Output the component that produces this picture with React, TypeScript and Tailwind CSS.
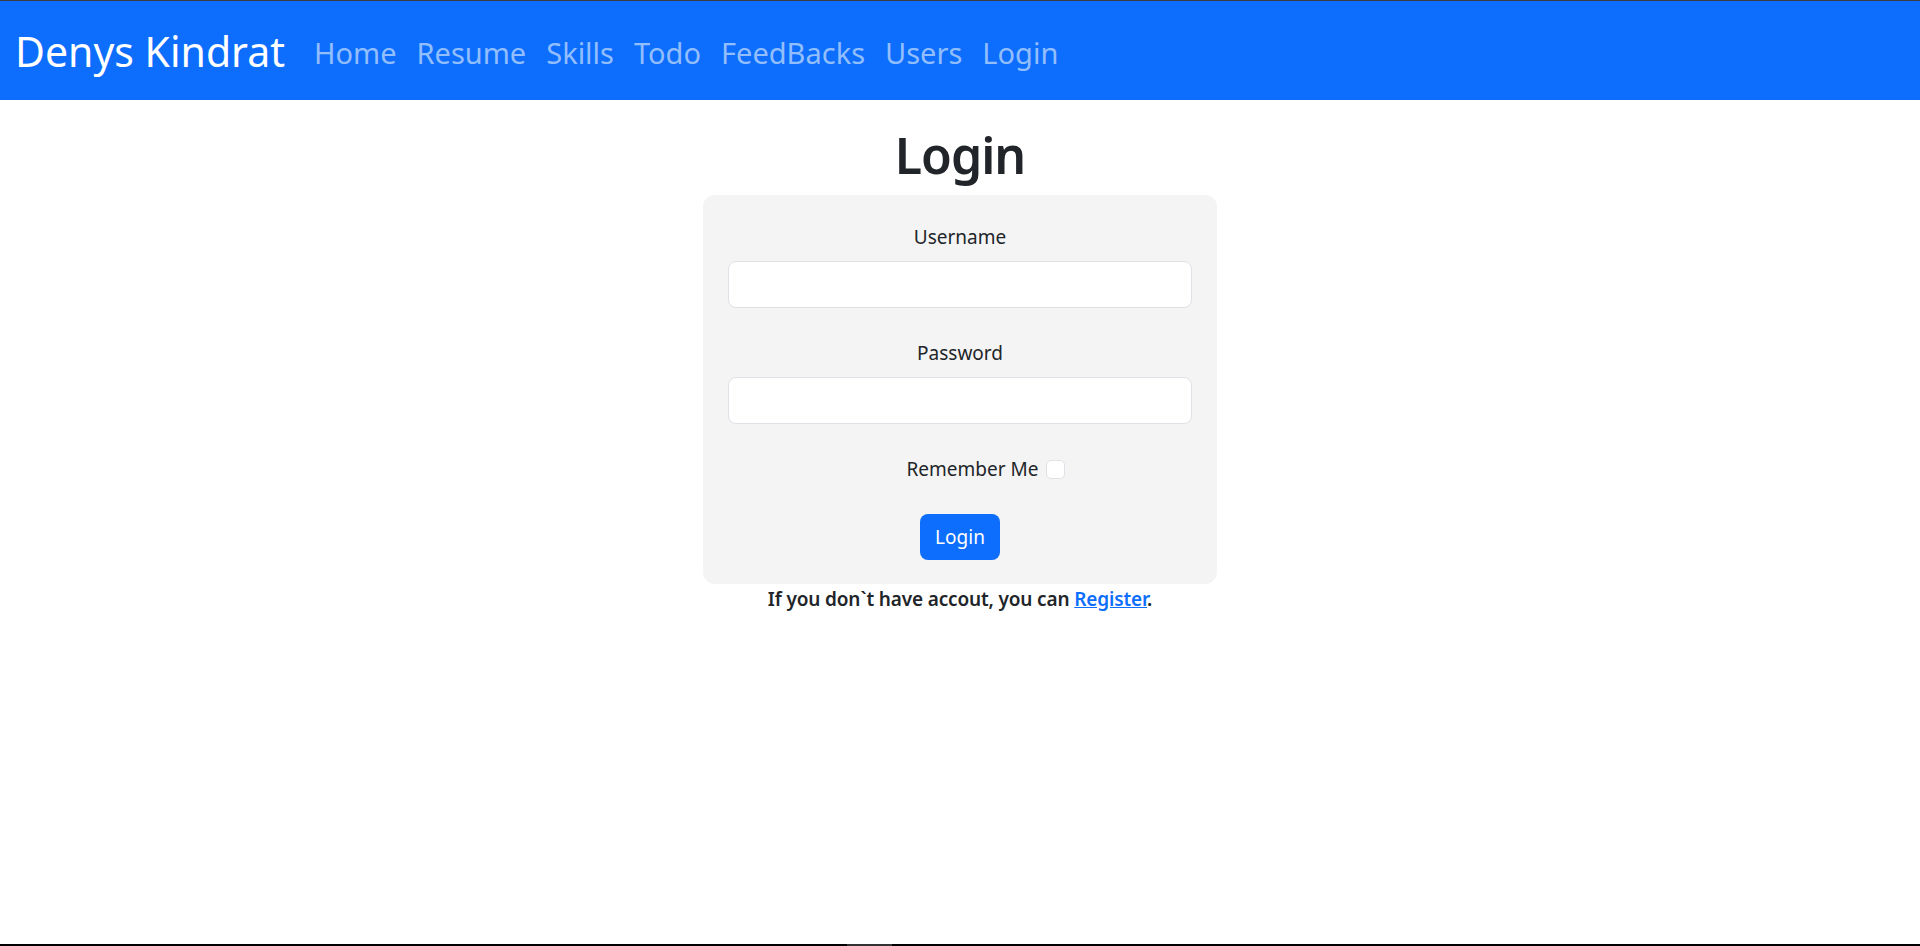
import React from "react";

const links = ["Home", "Resume", "Skills", "Todo", "FeedBacks", "Users", "Login"];

export default function App() {
  return (
    <div
      className="min-h-screen flex flex-col bg-white text-[#212529]"
      style={{ fontFamily: '"Noto Sans", "Open Sans", sans-serif' }}
    >
      <div className="h-px bg-[#3c3c3c]" />
      <nav className="h-[99px] bg-[#0d6efd] flex items-start pl-[15px]">
        <a className="mt-[29px] text-[41px] leading-[42px] text-white whitespace-nowrap">
          Denys Kindrat
        </a>
        <ul className="flex gap-[20px] ml-[29px] mt-[37px]">
          {links.map((l) => (
            <li key={l} className="text-[29px] leading-[30px] text-[#92befe] whitespace-nowrap">
              {l}
            </li>
          ))}
        </ul>
      </nav>
      <main className="flex-1 flex flex-col items-center">
        <h1 className="mt-[24px] mb-[9px] text-[50px] leading-[62px] font-semibold tracking-[-1px]">Login</h1>
        <div className="w-[514px] bg-[#f4f4f4] rounded-[12px] px-[25px] pt-[27px] pb-[24px] flex flex-col">
          <label className="text-[19px] leading-[30px] text-center">Username</label>
          <div className="mt-[9px] h-[47px] bg-white border border-[#dee2e6] rounded-[8px]" />
          <label className="mt-[30px] text-[19px] leading-[30px] text-center">Password</label>
          <div className="mt-[9px] h-[47px] bg-white border border-[#dee2e6] rounded-[8px]" />
          <div className="mt-[30px] flex justify-center items-center pl-[52px] h-[30px]">
            <span className="text-[19px] leading-[30px]">Remember Me</span>
            <span className="ml-[8px] w-[19px] h-[19px] bg-white border border-[#dee2e6] rounded-[5px]" />
          </div>
          <div className="mt-[30px] flex justify-center">
            <button className="h-[46px] px-[15px] bg-[#0d6efd] text-white text-[19px] rounded-[8px]">
              Login
            </button>
          </div>
        </div>
        <p className="mt-[3px] text-[19px] leading-[24px] font-semibold tracking-[-0.15px]">
          If you don`t have accout, you can{" "}
          <a className="text-[#0d6efd] underline">Register</a>.
        </p>
      </main>
      <div className="h-[2px] bg-black flex">
        <div className="ml-[847px] w-[45px] bg-[#333333]" />
      </div>
    </div>
  );
}
